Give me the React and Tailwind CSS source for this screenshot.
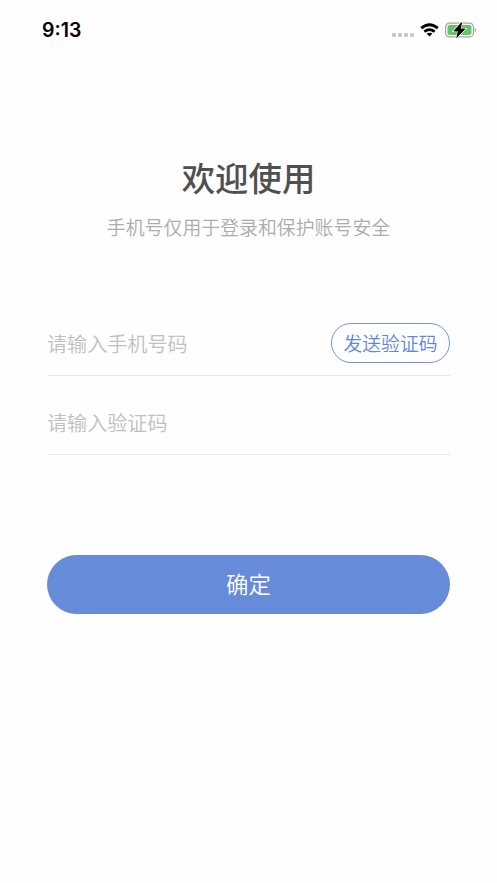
import {useState} from 'react'

function StatusBar() {
  return (
    <div className="flex h-[60px] items-center justify-between pl-[42px] pr-[20px]">
      <span className="pt-[2px] font-[Inter] text-[19.5px] font-semibold leading-none text-black">9:13</span>
      <div className="flex items-center">
        <div className="mr-[6px] mt-[9px] flex gap-[2px]">
          <i className="h-[4px] w-[4px] rounded-[1px] bg-[#c9c9c9]" />
          <i className="h-[4px] w-[4px] rounded-[1px] bg-[#c9c9c9]" />
          <i className="h-[4px] w-[4px] rounded-[1px] bg-[#c9c9c9]" />
          <i className="h-[4px] w-[4px] rounded-[1px] bg-[#c9c9c9]" />
        </div>
        <svg width="19" height="14" viewBox="0 0 20 14" fill="none" stroke="#000" strokeWidth="3">
          <path d="M1.3 5 Q10 -2.2 18.7 5" />
          <path d="M4.6 8.8 Q10 4.4 15.4 8.8" />
          <path d="M10 13.8 L7 11 Q10 8.6 13 11 Z" fill="#000" stroke="none" />
        </svg>
        <svg className="ml-[6px]" width="32" height="18" viewBox="0 0 32 18">
          <rect x="0.6" y="2.1" width="27.8" height="13.8" rx="4" fill="none" stroke="#a6a6a6" strokeWidth="1.2" />
          <rect x="2.5" y="4" width="24" height="10" rx="2.2" fill="#65c466" />
          <path d="M29.6 6.6 Q32.6 9 29.6 11.4 Z" fill="#a6a6a6" />
          <path d="M16.6 1.6 L9 10 H13.4 L11.8 16.4 L19.8 8 H15.2 Z" fill="#000" stroke="#fff" strokeWidth="2" />
          <path d="M16.6 1.6 L9 10 H13.4 L11.8 16.4 L19.8 8 H15.2 Z" fill="#000" stroke="#000" strokeWidth="0.9" strokeLinejoin="round" />
        </svg>
      </div>
    </div>
  )
}

export default function App() {
  const [phone, setPhone] = useState('')
  const [code, setCode] = useState('')

  return (
    <main className="h-[883px] w-[497px] overflow-hidden bg-[#fefefe] font-['Noto_Sans_CJK_SC',sans-serif]">
      <StatusBar />
      <h1 className="mt-[93px] text-center text-[33.4px] font-medium leading-[48px] text-[#505050]">欢迎使用</h1>
      <p className="mt-[12px] text-center text-[18.9px] font-[350] leading-[28px] text-[#acacac]">手机号仅用于登录和保护账号安全</p>
      <form className="mx-[47px] mt-[82px]" onSubmit={(e) => e.preventDefault()}>
        <div className="flex h-[53px] items-start justify-between border-b border-[#e8e8e8]">
          <input
            className="h-[40px] w-[200px] text-[20.1px] font-[350] outline-none placeholder:text-[#c0c0c0]"
            placeholder="请输入手机号码"
            value={phone}
            onChange={(e) => setPhone(e.target.value)}
          />
          <button type="button" className="h-[40px] w-[119px] rounded-full border border-[#7094dd] text-[18.8px] font-[350] text-[#5f87da]">
            发送验证码
          </button>
        </div>
        <div className="mt-[26px] flex h-[53px] items-start border-b border-[#e8e8e8]">
          <input
            className="h-[40px] w-full text-[20.1px] font-[350] outline-none placeholder:text-[#c0c0c0]"
            placeholder="请输入验证码"
            value={code}
            onChange={(e) => setCode(e.target.value)}
          />
        </div>
        <button type="submit" className="mt-[100px] h-[59px] w-full rounded-full bg-[#658bd9] pb-[1px] text-[22.4px] font-[350] text-white">
          确定
        </button>
      </form>
    </main>
  )
}
